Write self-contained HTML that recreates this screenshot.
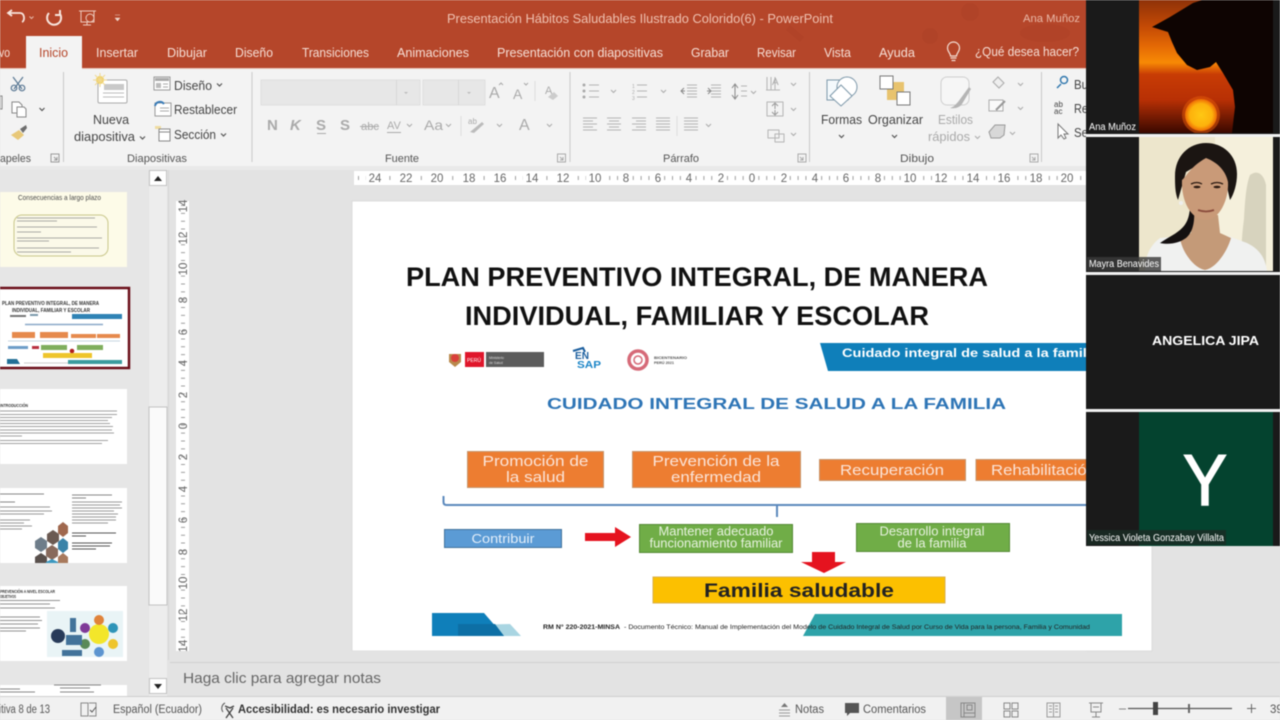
<!DOCTYPE html>
<html lang="es"><head><meta charset="utf-8"><title>PowerPoint</title>
<style>
html,body{margin:0;padding:0;width:1280px;height:720px;overflow:hidden;background:#e3e3e3}
svg{display:block;filter:blur(.4px)}
text{font-family:"Liberation Sans",sans-serif;fill:#444;font-size:12px}
.tab{font-size:12.5px;fill:#f6ded5}
.r{font-size:12.5px;fill:#454545}
.d{font-size:12.5px;fill:#aaa}
.g{font-size:11px;fill:#555}
.b{font-weight:bold}
.w{fill:#fff}
.i{fill:none;stroke:#777;stroke-width:1}
.l{fill:none;stroke:#b5b5b5;stroke-width:1}
.rn{font-size:11.5px;fill:#666;text-anchor:middle}
.box{fill:#fbe4d8;font-size:15px;text-anchor:middle}
.gb{fill:#e7f2df;font-size:12.5px;text-anchor:middle}
.n{fill:#fff;font-size:10px}
.t{fill:#aaa}
.ch{fill:none;stroke:#555;stroke-width:1.2}
.cd{fill:none;stroke:#aaa;stroke-width:1}
</style></head><body>
<svg width="1280" height="720" viewBox="0 0 1280 720" xmlns="http://www.w3.org/2000/svg">
<defs>
<linearGradient id="sun" x1="0" y1="0" x2="0" y2="1"><stop offset="0" stop-color="#8f3208"/><stop offset=".2" stop-color="#c44a05"/><stop offset=".35" stop-color="#e56a05"/><stop offset=".47" stop-color="#f88a05"/><stop offset=".56" stop-color="#c83c05"/><stop offset=".75" stop-color="#b83005"/><stop offset="1" stop-color="#3a0800"/></linearGradient>
<radialGradient id="s2"><stop offset="0" stop-color="#ffc814"/><stop offset=".7" stop-color="#fdb20c"/><stop offset="1" stop-color="#ee6a05"/></radialGradient>
<clipPath id="v1"><rect x="1139" y="0" width="134" height="133"/></clipPath>
<clipPath id="v2"><rect x="1139" y="137" width="134" height="134"/></clipPath>
</defs>

<!-- base -->
<rect width="1280" height="720" fill="#e3e3e3"/>
<rect width="1086" height="68" fill="#b5462a"/>
<rect y="68" width="1086" height="1" fill="#e8c5b8"/>
<rect y="69" width="1086" height="97" fill="#f3f3f3"/>
<rect y="166" width="1086" height="4" fill="#e9e9e9"/>
<g fill="#a83f26" opacity=".35"><ellipse cx="1045" cy="33" rx="25" ry="9"/><circle cx="930" cy="36" r="8"/><circle cx="970" cy="12" r="9"/><path d="M790 25l14 12-4 5-14-12z"/></g>

<!-- QAT -->
<g fill="none" stroke="#f7e4dc" stroke-width="1.8">
<path d="M22 22c3-1 3-9-2-9H9M12 10l-4 3 4 3"/>
<path d="M49 13a7 7 0 1 0 11 1M60 10v5h-5" stroke-width="2"/>
</g>
<path d="M29.500 16.500l2 2 2-2" fill="none" stroke="#e6b9a9"/>
<g fill="none" stroke="#edcabd"><path d="M79 11h17M81 11v11h13V11M87 22v3M83 25h8"/><circle cx="90" cy="18" r="4"/></g>
<path d="M115 15h5M115 18h5l-2.500 3z" fill="#f0d6cb" stroke="#f0d6cb" stroke-width=".5"/>

<!-- tabs -->
<text x="447" y="23" textLength="386" lengthAdjust="spacingAndGlyphs" style="fill:#efc1b0;font-size:12.500px">Presentación Hábitos Saludables Ilustrado Colorido(6)  -  PowerPoint</text>
<text x="1023" y="22" textLength="57" lengthAdjust="spacingAndGlyphs" style="fill:#eab9a8;font-size:11px">Ana Muñoz</text>
<rect x="26" y="36" width="56" height="33" fill="#f3f3f3"/>
<text x="39" y="57" textLength="29" lengthAdjust="spacingAndGlyphs" class="tab" style="fill:#b5462a">Inicio</text>
<text x="-1" y="57" textLength="11" lengthAdjust="spacingAndGlyphs" class="tab">vo</text>
<text x="96" y="57" textLength="42" lengthAdjust="spacingAndGlyphs" class="tab">Insertar</text>
<text x="167" y="57" textLength="40" lengthAdjust="spacingAndGlyphs" class="tab">Dibujar</text>
<text x="235" y="57" textLength="38" lengthAdjust="spacingAndGlyphs" class="tab">Diseño</text>
<text x="302" y="57" textLength="67" lengthAdjust="spacingAndGlyphs" class="tab">Transiciones</text>
<text x="397" y="57" textLength="72" lengthAdjust="spacingAndGlyphs" class="tab">Animaciones</text>
<text x="497" y="57" textLength="166" lengthAdjust="spacingAndGlyphs" class="tab">Presentación con diapositivas</text>
<text x="691" y="57" textLength="38" lengthAdjust="spacingAndGlyphs" class="tab">Grabar</text>
<text x="757" y="57" textLength="39" lengthAdjust="spacingAndGlyphs" class="tab">Revisar</text>
<text x="824" y="57" textLength="27" lengthAdjust="spacingAndGlyphs" class="tab">Vista</text>
<text x="879" y="57" textLength="36" lengthAdjust="spacingAndGlyphs" class="tab">Ayuda</text>
<text x="975" y="56" textLength="104" lengthAdjust="spacingAndGlyphs" class="tab">¿Qué desea hacer?</text>
<path d="M950.500 56c0-3-3-4-3-8a6 6 0 0 1 12 0c0 4-3 5-3 8zM950.500 58h6M951.500 60.500h4" fill="none" stroke="#f3dcd2" stroke-width="1.200"/>

<!-- ribbon separators -->
<g stroke="#c9c9c9"><path d="M63.500 72v90M252 72v90M570 72v90M809.500 72v90M1041.500 72v90"/></g>
<text x="0" y="162" textLength="31" lengthAdjust="spacingAndGlyphs" class="g">apeles</text>
<text x="127" y="162" textLength="60" lengthAdjust="spacingAndGlyphs" class="g">Diapositivas</text>
<text x="385" y="162" textLength="34" lengthAdjust="spacingAndGlyphs" class="g">Fuente</text>
<text x="663" y="162" textLength="36" lengthAdjust="spacingAndGlyphs" class="g">Párrafo</text>
<text x="900" y="162" textLength="34" lengthAdjust="spacingAndGlyphs" class="g">Dibujo</text>
<g fill="none" stroke="#999"><path d="M51 154h8v8h-8zM54 157l3 3M57 157v3h-3"/></g>
<g fill="none" stroke="#aaa"><path d="M557.500 154h8v8h-8zM560 157l3 3M563 157v3h-3M798 154h8v8h-8zM800 157l3 3M803 157v3h-3M1030 154h8v8h-8zM1032 157l3 3M1035 157v3h-3"/></g>

<!-- clipboard -->
<g fill="none" stroke="#5a7894" stroke-width="1.200"><path d="M13 77l9 12M23 77l-9 12"/><circle cx="14" cy="88" r="2.800"/><circle cx="22" cy="88" r="2.800"/></g>
<g fill="#fff" stroke="#888"><path d="M12 102h7l3 3v8h-10z"/><path d="M17 107h7l2 2v8h-9z"/></g>
<path d="M39.500 108l2.500 2.500 2.500-2.500" class="ch"/>
<path d="M11 135l8-5 5 5-6 5z" fill="#e8c878"/><path d="M20 129l6-4 1 3-4 5z" fill="#6e6e6e"/>
<path d="M0 96h2v13H0z" fill="#fff" stroke="#888"/>

<!-- slides group -->
<rect x="98" y="80" width="29" height="23" rx="1.500" fill="#fff" stroke="#aaa"/><rect x="104" y="84" width="20" height="6" fill="#c9c9c9"/><path d="M103 93h21M103 97h21" stroke="#bbb"/>
<circle cx="100" cy="80" r="4" fill="#f0d060"/><path d="M100 73v14M93 80h14M95 75l10 10M105 75l-10 10" stroke="#f0d890"/>
<text x="93" y="124" textLength="36" lengthAdjust="spacingAndGlyphs" class="r">Nueva</text>
<text x="74" y="141" textLength="61" lengthAdjust="spacingAndGlyphs" class="r">diapositiva</text>
<path d="M140 136.500l2.500 2.500 2.500-2.500" class="ch"/>
<rect x="154" y="77" width="16" height="13" fill="#fff" stroke="#999"/><rect x="155" y="78" width="14" height="3" fill="#aaa"/><rect x="156" y="83" width="5" height="5" fill="#bbb"/><path d="M163 84h5M163 87h5" stroke="#aaa"/>
<text x="174" y="90" textLength="38" lengthAdjust="spacingAndGlyphs" class="r">Diseño</text>
<path d="M217 83.500l2.500 2.500 2.500-2.500" class="ch"/>
<rect x="155" y="103" width="16" height="13" fill="#fff" stroke="#999"/><path d="M160 108h9M160 111h9" stroke="#aaa"/><path d="M155 106a5 5 0 0 1 9-2" fill="none" stroke="#3a7cb8" stroke-width="2"/>
<text x="174" y="114" textLength="63" lengthAdjust="spacingAndGlyphs" class="r">Restablecer</text>
<path d="M155 126h6v3h-6z" fill="#f0dca0"/><rect x="159" y="129" width="11" height="12" fill="#fff" stroke="#888"/><path d="M159 132h11" stroke="#888"/>
<text x="174" y="139" textLength="42" lengthAdjust="spacingAndGlyphs" class="r">Sección</text>
<path d="M221 133.500l2.500 2.500 2.500-2.500" class="ch"/>

<!-- font group -->
<rect x="261" y="80" width="159" height="25" fill="#e7e7e7" stroke="#dfdfdf"/>
<rect x="396" y="80" width="1" height="25" fill="#d8d8d8"/>
<rect x="423" y="80" width="62" height="25" fill="#e7e7e7" stroke="#dfdfdf"/>
<rect x="458" y="80" width="1" height="25" fill="#d8d8d8"/>
<path d="M404 92h4l-2 2zM467 92h4l-2 2z" fill="#bbb"/>
<text x="489" y="98" style="font-size:16px" class="t">A</text><text x="513" y="99" style="font-size:14px" class="t">A</text>
<path d="M499 85l2-2 2 2M524 83l2 2 2-2" class="cd"/>
<path d="M535 81v20" stroke="#ddd"/>
<text x="545" y="94" style="font-size:11px" class="t">A</text><path d="M548 97l6-5 4 4-5 4z" fill="#ccc"/>
<text x="267" y="130" class="b t" style="font-size:15px">N</text>
<text x="290" y="130" class="b t" style="font-size:15px;font-style:italic">K</text>
<text x="316" y="130" class="b t" style="font-size:15px">S</text><path d="M317 133.500h9" stroke="#aaa"/>
<text x="340" y="130" class="b t" style="font-size:15px">S</text>
<text x="361" y="130" class="t" style="font-size:11px" textLength="18" lengthAdjust="spacingAndGlyphs">abc</text><path d="M360 126.500h19" stroke="#aaa"/>
<text x="387" y="129" class="t" style="font-size:11px">AV</text><path d="M387 132.500h14" stroke="#aaa"/>
<path d="M407 124l2.500 2.500 2.500-2.500" class="cd"/>
<text x="424" y="130" class="t" style="font-size:14px" textLength="19" lengthAdjust="spacingAndGlyphs">Aa</text>
<path d="M446 124l2.500 2.500 2.500-2.500" class="cd"/>
<path d="M461 116v20" stroke="#ddd"/>
<text x="468" y="124" class="t" style="font-size:8px">ab</text><path d="M470 132l12-10 2 2-10 9z" fill="#bbb"/>
<path d="M497 124l2.500 2.500 2.500-2.500" class="cd"/>
<text x="519" y="130" class="t" style="font-size:16px">A</text>
<path d="M547 124l2.500 2.500 2.500-2.500" class="cd"/>

<!-- paragraph group -->
<g class="l">
<path d="M589 85h10M589 91h10M589 97h10M637 85h10M637 91h10M637 97h10M687 85h10M687 88h10M687 91h10M687 94h10M687 97h10M711 85h10M711 88h10M711 91h10M711 94h10M711 97h10M741 86h6M741 91h6M741 96h6"/>
<path d="M583 118h14M583 121h10M583 124h14M583 127h10M583 130h14M607 118h14M609 121h10M607 124h14M609 127h10M607 130h14M632 118h14M636 121h10M632 124h14M636 127h10M632 130h14M656 118h14M656 121h14M656 124h14M656 127h14M656 130h14M684 118h14M684 121h14M684 124h14M684 127h14M684 130h14"/>
<path d="M677 116v20" stroke="#ddd"/>
<path d="M767 77v13M771 77v13M775 77v13M766 90h14M767 102h16v14h-16zM768 130h11v8h-11zM775 134h9v8h-9z"/>
</g>
<circle cx="584" cy="85" r="1.500" fill="#aaa"/><circle cx="584" cy="91" r="1.500" fill="#aaa"/><circle cx="584" cy="97" r="1.500" fill="#aaa"/>
<text x="632" y="88" style="font-size:5px" class="t">1</text><text x="632" y="94" style="font-size:5px" class="t">2</text><text x="632" y="100" style="font-size:5px" class="t">3</text>
<path d="M611 90l2.500 2.500 2.500-2.500M661 90l2.500 2.500 2.500-2.500M751 91l2.500 2.500 2.500-2.500M706 124l2.500 2.500 2.500-2.500M791 83l2.500 2.500 2.500-2.500M791 108l2.500 2.500 2.500-2.500M791 133l2.500 2.500 2.500-2.500" class="cd"/>
<path d="M685 91h-4M684 88l-3 3 3 3M707 91h3M708 88l3 3-3 3" fill="none" stroke="#888"/>
<path d="M735 85v13M732 88l3-4 3 4M732 95l3 4 3-4" fill="none" stroke="#888"/>
<text x="772" y="85" style="font-size:10px" class="t">A</text>
<path d="M775 104v5M772 106l3-3 3 3M775 110v5M772 112l3 3 3-3" fill="none" stroke="#999"/>

<!-- drawing group -->
<rect x="827" y="80" width="21" height="20" fill="#f4f9fc" stroke="#7d98aa"/>
<circle cx="847" cy="87" r="10" fill="#fff" stroke="#7d98aa"/>
<path d="M841 85l11 11-11 10-11-10z" fill="#fff" stroke="#7d98aa"/>
<text x="821" y="124" textLength="41" lengthAdjust="spacingAndGlyphs" class="r">Formas</text>
<path d="M839 135l2.500 2.500 2.500-2.500" class="ch"/>
<rect x="887" y="82" width="17" height="18" fill="#e8c36e"/>
<rect x="880" y="76" width="13" height="13" fill="#fff" stroke="#777"/>
<rect x="897" y="92" width="13" height="13" fill="#fff" stroke="#777"/>
<text x="868" y="124" textLength="55" lengthAdjust="spacingAndGlyphs" class="r">Organizar</text>
<path d="M892 135l2.500 2.500 2.500-2.500" class="ch"/>
<rect x="941" y="77" width="28" height="28" rx="6" fill="#f6f6f6" stroke="#cfcfcf"/>
<path d="M950 108c4-1 6-4 8-6l11-15 2 2-9 15c-2 3-6 5-12 4z" fill="#b5b5b5"/>
<text x="938" y="124" textLength="35" lengthAdjust="spacingAndGlyphs" class="d">Estilos</text>
<text x="928" y="141" textLength="42" lengthAdjust="spacingAndGlyphs" class="d">rápidos</text>
<path d="M975 136l2.500 2.500 2.500-2.500" class="cd"/>
<path d="M993 82l5-5 6 6-5 5z" fill="#eee" stroke="#aaa"/>
<path d="M1018 83l2.500 2.500 2.500-2.500M1018 107l2.500 2.500 2.500-2.500M1010 132l2.500 2.500 2.500-2.500" class="cd"/>
<path d="M989 100h14v11h-14z" fill="#fafafa" stroke="#aaa"/><path d="M996 110l9-9" stroke="#999" stroke-width="2"/>
<path d="M989 132l6-7h10l-1 10-4 3h-9z" fill="#d8d8d8" stroke="#999"/>

<!-- edit group -->
<circle cx="1064" cy="80" r="3.500" fill="none" stroke="#3178ae" stroke-width="1.500"/><path d="M1061 84l-4 4" stroke="#3178ae" stroke-width="1.500"/>
<text x="1074" y="89" class="r" textLength="14" lengthAdjust="spacingAndGlyphs">Bu</text>
<text x="1054" y="107" style="font-size:8px;fill:#444">ab</text><text x="1054" y="114" style="font-size:8px;fill:#444">ac</text>
<text x="1074" y="113" class="r" textLength="14" lengthAdjust="spacingAndGlyphs">Re</text>
<path d="M1058 124v14l3-3 3 4 2-1-2-4h4z" fill="#fff" stroke="#777"/>
<text x="1074" y="137" class="r" textLength="14" lengthAdjust="spacingAndGlyphs">Se</text>

<!-- workspace -->
<rect x="0" y="170" width="148" height="526" fill="#e6e6e6"/>
<rect x="149" y="170" width="18" height="526" fill="#ededed"/>
<rect x="149" y="407" width="18" height="198" fill="#fafafa" stroke="#c2c2c2"/>
<rect x="149.500" y="170.500" width="17" height="15" fill="#fff" stroke="#c2c2c2"/>
<path d="M154 181h8l-4-5z" fill="#222"/>
<rect x="149.500" y="678.500" width="17" height="15" fill="#fff" stroke="#c2c2c2"/>
<path d="M154 684h8l-4 5z" fill="#222"/>
<rect x="168" y="170" width="1" height="490" fill="#d5d5d5"/>

<!-- rulers -->
<rect x="354" y="171" width="732" height="14" fill="#fff"/>
<path d="M358 178H1086" stroke="#777" stroke-width="4" stroke-dasharray="1 6.850" opacity=".7"/>
<rect x="176" y="201" width="13" height="450" fill="#fff"/>
<path d="M183 205V650" stroke="#777" stroke-width="4" stroke-dasharray="1 6.850" opacity=".7"/>
<g fill="#fff"><rect x="366" y="172" width="19" height="12"/><rect x="397" y="172" width="19" height="12"/><rect x="428" y="172" width="19" height="12"/><rect x="460" y="172" width="19" height="12"/><rect x="491" y="172" width="19" height="12"/><rect x="523" y="172" width="19" height="12"/><rect x="554" y="172" width="19" height="12"/><rect x="586" y="172" width="19" height="12"/><rect x="621" y="172" width="10" height="12"/><rect x="653" y="172" width="10" height="12"/><rect x="684" y="172" width="10" height="12"/><rect x="716" y="172" width="10" height="12"/><rect x="747" y="172" width="10" height="12"/><rect x="779" y="172" width="10" height="12"/><rect x="810" y="172" width="10" height="12"/><rect x="841" y="172" width="10" height="12"/><rect x="873" y="172" width="10" height="12"/><rect x="901" y="172" width="19" height="12"/><rect x="932" y="172" width="19" height="12"/><rect x="964" y="172" width="19" height="12"/><rect x="995" y="172" width="19" height="12"/><rect x="1027" y="172" width="19" height="12"/><rect x="1058" y="172" width="19" height="12"/></g>
<g>
<text class="rn" x="375" y="182">24</text><text class="rn" x="406" y="182">22</text><text class="rn" x="437" y="182">20</text><text class="rn" x="469" y="182">18</text><text class="rn" x="500" y="182">16</text><text class="rn" x="532" y="182">14</text><text class="rn" x="563" y="182">12</text><text class="rn" x="595" y="182">10</text><text class="rn" x="626" y="182">8</text><text class="rn" x="658" y="182">6</text><text class="rn" x="689" y="182">4</text><text class="rn" x="721" y="182">2</text><text class="rn" x="752" y="182">0</text><text class="rn" x="784" y="182">2</text><text class="rn" x="815" y="182">4</text><text class="rn" x="846" y="182">6</text><text class="rn" x="878" y="182">8</text><text class="rn" x="910" y="182">10</text><text class="rn" x="941" y="182">12</text><text class="rn" x="973" y="182">14</text><text class="rn" x="1004" y="182">16</text><text class="rn" x="1036" y="182">18</text><text class="rn" x="1067" y="182">20</text>
</g>
<g>
<text class="rn" transform="translate(187 206) rotate(-90)">14</text><text class="rn" transform="translate(187 238) rotate(-90)">12</text><text class="rn" transform="translate(187 269) rotate(-90)">10</text><text class="rn" transform="translate(187 300) rotate(-90)">8</text><text class="rn" transform="translate(187 332) rotate(-90)">6</text><text class="rn" transform="translate(187 363) rotate(-90)">4</text><text class="rn" transform="translate(187 395) rotate(-90)">2</text><text class="rn" transform="translate(187 426) rotate(-90)">0</text><text class="rn" transform="translate(187 457) rotate(-90)">2</text><text class="rn" transform="translate(187 489) rotate(-90)">4</text><text class="rn" transform="translate(187 520) rotate(-90)">6</text><text class="rn" transform="translate(187 552) rotate(-90)">8</text><text class="rn" transform="translate(187 583) rotate(-90)">10</text><text class="rn" transform="translate(187 615) rotate(-90)">12</text><text class="rn" transform="translate(187 646) rotate(-90)">14</text>
</g>

<!-- thumbnails -->
<rect x="-1" y="192" width="128" height="75" fill="#fdfbe8"/>
<text x="18" y="200" textLength="83" lengthAdjust="spacingAndGlyphs" style="font-size:7.500px;fill:#4a4a4a">Consecuencias a largo plazo</text>
<rect x="14" y="215" width="94" height="41" rx="8" fill="#fbf9e9" stroke="#c9c78a"/>
<g stroke="#8a8a8a" stroke-width="1" opacity=".7"><path d="M17 218h78M17 221h40M17 227h80M17 232h24M17 238h85M17 241h32M17 248h82M17 252h54"/></g>

<rect x="-2" y="288" width="131" height="80" fill="#fff" stroke="#6b0f1a" stroke-width="2.500"/>
<text x="2" y="305" textLength="97" lengthAdjust="spacingAndGlyphs" class="b" style="font-size:5.500px;fill:#333">PLAN PREVENTIVO INTEGRAL, DE MANERA</text>
<text x="12" y="312" textLength="78" lengthAdjust="spacingAndGlyphs" class="b" style="font-size:5.500px;fill:#333">INDIVIDUAL, FAMILIAR Y ESCOLAR</text>
<path d="M10 316h16" stroke="#777" stroke-width="2"/><path d="M30 315h8" stroke="#7a98aa" stroke-width="2"/>
<rect x="72" y="314" width="50" height="5" fill="#2f83b5"/>
<path d="M25 324.500h78" stroke="#8aa8c8" stroke-width="1.500"/>
<g fill="#e68a4d"><rect x="12" y="332" width="23" height="6"/><rect x="40" y="332" width="28" height="6"/><rect x="71" y="334" width="25" height="4"/><rect x="97" y="334" width="23" height="4"/></g>
<path d="M8 341h112" stroke="#c6d4e0"/>
<rect x="8" y="346" width="20" height="3" fill="#6d9dc8"/><rect x="32" y="346" width="7" height="3" fill="#b83040"/>
<rect x="41" y="345" width="26" height="5" fill="#7fae5d"/><rect x="77" y="345" width="26" height="5" fill="#7fae5d"/>
<circle cx="72" cy="351" r="2.300" fill="#b02020"/>
<rect x="43" y="353" width="49" height="5" fill="#eec52c"/>
<path d="M7 359h10l3 5H7z" fill="#226f96"/><rect x="68" y="360" width="54" height="4" fill="#3b9c9e"/><path d="M24 363h44" stroke="#ccc"/>

<rect x="-1" y="389" width="128" height="75" fill="#fff"/>
<text x="0" y="407" textLength="28" lengthAdjust="spacingAndGlyphs" class="b" style="font-size:4.500px;fill:#333">INTRODUCCIÓN</text>
<g stroke="#8a8a8a" opacity=".8"><path d="M0 411h117M0 414.500h117M0 417.500h112M0 420.500h108M0 423.500h110M0 426.500h113M0 430h112M0 433h114M0 436h22M0 440.500h108M0 443.500h102"/></g>

<rect x="-1" y="488" width="128" height="75" fill="#fff"/>
<g stroke="#555" opacity=".7"><path d="M0 494h44M72 495h40M72 498h14"/><path d="M0 502h15"/></g>
<g stroke="#999"><path d="M0 507h50M0 511h52M0 514h44M0 520h30M0 523h24M0 526h32M0 529h22M72 502h50M72 505h48M72 508h50M72 511h42M72 514h46M72 517h44M72 520h44M72 523h36"/></g>
<g stroke="#555"><path d="M72 533h44M72 536h14M72 543h40M72 546h38M72 549h24"/></g>
<g><polygon points="41,537 47,541 47,548 41,552 35,548 35,541" fill="#6e7d8a"/><polygon points="53,530 59,534 59,541 53,545 47,541 47,534" fill="#6b5a52"/><polygon points="63,522 68,526 68,533 63,537 58,533 58,526" fill="#a0684e"/><polygon points="52,545 58,549 58,556 52,560 46,556 46,549" fill="#886a5c"/><polygon points="63,538 68,542 68,549 63,553 58,549 58,542" fill="#3b83a8"/><polygon points="41,553 47,557 47,563 35,563 35,557" fill="#59504c"/><polygon points="63,553 68,557 68,563 58,563 58,557" fill="#a8795c"/><polygon points="52,559 58,562 58,563 46,563 46,562" fill="#3b98c0"/></g>

<rect x="-1" y="586" width="128" height="75" fill="#fff"/>
<text x="0" y="593" textLength="55" lengthAdjust="spacingAndGlyphs" class="b" style="font-size:4.500px;fill:#333">PREVENCIÓN A NIVEL ESCOLAR</text>
<text x="0" y="598" textLength="16" lengthAdjust="spacingAndGlyphs" class="b" style="font-size:4.500px;fill:#333">OBJETIVOS</text>
<g stroke="#777" opacity=".8"><path d="M0 600.500h60M0 604h50M0 608h55M0 617h40M0 620.500h42M0 624h38M0 628h40M0 631h26"/></g>
<rect x="47" y="611" width="76" height="46" fill="#e9f4f6"/>
<circle cx="99" cy="634" r="10" fill="#f3e62a"/>
<circle cx="99" cy="620" r="5" fill="#e0833a"/><circle cx="113" cy="628" r="5" fill="#2e94b8"/><circle cx="113" cy="644" r="5" fill="#eec52c"/><circle cx="99" cy="652" r="5" fill="#5d95d0"/><circle cx="85" cy="644" r="5" fill="#5a8a58"/><circle cx="85" cy="628" r="5" fill="#7f3a98"/>
<circle cx="58" cy="636" r="7" fill="#283b5a"/>
<path d="M70 618h6v14h-6zM66 635h16v10H66zM62 650h20v6H62z" fill="#43739a"/>

<rect x="-1" y="685" width="128" height="11" fill="#fff"/>
<g stroke="#555" opacity=".7"><path d="M0 689h20M54 685h47M60 688h30M0 692h35M60 692h34"/></g>

<!-- slide -->
<rect x="352" y="201" width="800" height="450" fill="#fff" stroke="#dcdcdc"/>
<text x="406" y="286" textLength="582" lengthAdjust="spacingAndGlyphs" class="b" style="font-size:27px;fill:#111">PLAN PREVENTIVO INTEGRAL, DE MANERA</text>
<text x="465" y="325" textLength="464" lengthAdjust="spacingAndGlyphs" class="b" style="font-size:27px;fill:#111">INDIVIDUAL, FAMILIAR Y ESCOLAR</text>
<!-- logos -->
<path d="M449 354h12v8l-6 5-6-5z" fill="#b9894c"/><circle cx="455" cy="358" r="4" fill="#d9403a"/>
<rect x="465" y="352" width="19" height="15" fill="#e0162b"/>
<text x="467" y="362" class="w" style="font-size:5.500px" textLength="14" lengthAdjust="spacingAndGlyphs">PERÚ</text>
<rect x="486" y="352" width="58" height="15" fill="#5c5c5c"/>
<text x="489" y="359" style="font-size:3.500px;fill:#ddd">Ministerio</text><text x="489" y="364" style="font-size:3.500px;fill:#ddd">de Salud</text>
<path d="M573 351l10-3 2 4" fill="none" stroke="#1b5e9e" stroke-width="2"/>
<text x="575" y="359" class="b" style="font-size:10px;fill:#1b5e9e" textLength="14" lengthAdjust="spacingAndGlyphs">EN</text>
<text x="577" y="368" class="b" style="font-size:10px;fill:#1b85c7" textLength="24" lengthAdjust="spacingAndGlyphs">SAP</text>
<circle cx="638" cy="360" r="9" fill="none" stroke="#d66a78" stroke-width="3.500"/><circle cx="638" cy="360" r="4" fill="none" stroke="#d66a78" stroke-width="1.500"/>
<text x="654" y="359" class="b" style="font-size:3.800px;fill:#555" textLength="33" lengthAdjust="spacingAndGlyphs">BICENTENARIO</text>
<text x="654" y="364" class="b" style="font-size:3.800px;fill:#555" textLength="20" lengthAdjust="spacingAndGlyphs">PERÚ 2021</text>
<!-- banner -->
<polygon points="820,343 1100,343 1100,371 828,371" fill="#0f7fba"/>
<text x="842" y="357" textLength="257" lengthAdjust="spacingAndGlyphs" class="b w" style="font-size:12px">Cuidado integral de salud  a la familia</text>
<!-- heading -->
<text x="547" y="409" textLength="459" lengthAdjust="spacingAndGlyphs" class="b" style="font-size:16px;fill:#2e75b6">CUIDADO INTEGRAL DE SALUD A LA FAMILIA</text>
<!-- orange -->
<g fill="#ed7d31" stroke="#c7956c"><rect x="467.500" y="451.500" width="136" height="36"/><rect x="632.500" y="451.500" width="168" height="36"/><rect x="819.500" y="459.500" width="146" height="21"/><rect x="976" y="459.500" width="130" height="21"/></g>
<text class="box" x="535.500" y="466" textLength="106" lengthAdjust="spacingAndGlyphs">Promoción de</text>
<text class="box" x="535.500" y="482" textLength="59" lengthAdjust="spacingAndGlyphs">la salud</text>
<text class="box" x="716" y="466" textLength="127" lengthAdjust="spacingAndGlyphs">Prevención de la</text>
<text class="box" x="716" y="482" textLength="90" lengthAdjust="spacingAndGlyphs">enfermedad</text>
<text class="box" x="892" y="475" textLength="104" lengthAdjust="spacingAndGlyphs">Recuperación</text>
<text class="box" style="text-anchor:start" x="991" y="475" textLength="105" lengthAdjust="spacingAndGlyphs">Rehabilitación</text>
<!-- bracket -->
<path d="M443.500 496v6q0 3 3 3H1090M777 505v12" fill="none" stroke="#5b89bd" stroke-width="2"/>
<!-- row 2 -->
<rect x="444.500" y="529.500" width="117" height="18" fill="#5b9bd5" stroke="#41719c"/>
<text x="503" y="543" textLength="63" lengthAdjust="spacingAndGlyphs" style="font-size:13px;fill:#e4effa;text-anchor:middle">Contribuir</text>
<path d="M585 533h30v-6l16 10-16 10v-6h-30z" fill="#e5131f"/>
<rect x="639.500" y="524.500" width="153" height="28" fill="#70ad47" stroke="#558a36"/>
<rect x="856.500" y="523.500" width="153" height="28" fill="#70ad47" stroke="#558a36"/>
<text class="gb" x="716" y="535.500" textLength="115" lengthAdjust="spacingAndGlyphs">Mantener adecuado</text>
<text class="gb" x="716" y="547.500" textLength="133" lengthAdjust="spacingAndGlyphs">funcionamiento familiar</text>
<text class="gb" x="932" y="535.500" textLength="105" lengthAdjust="spacingAndGlyphs">Desarrollo integral</text>
<text class="gb" x="932" y="547.500" textLength="69" lengthAdjust="spacingAndGlyphs">de la familia</text>
<path d="M812 552h23v10h11l-22 11-23-11h11z" fill="#e5131f"/>
<rect x="653" y="577" width="292" height="26" fill="#fcc000" stroke="#d9b04c"/>
<text x="799" y="597" textLength="190" lengthAdjust="spacingAndGlyphs" class="b" style="font-size:19px;fill:#222;text-anchor:middle">Familia saludable</text>
<!-- footer -->
<polygon points="470,625 510,624 521,636 490,636" fill="#a9d5e2"/>
<polygon points="432,613 484,613 504,636 432,636" fill="#0f7fba"/>
<polygon points="458,624 495,624 504,636 458,636" fill="#0d6fa5"/>
<polygon points="815,614 1122,614 1122,636 803,636" fill="#2ea3a9"/>
<text x="543" y="629" textLength="77" lengthAdjust="spacingAndGlyphs" class="b" style="font-size:6.500px;fill:#222">RM N° 220-2021-MINSA</text>
<text x="624" y="629" textLength="466" lengthAdjust="spacingAndGlyphs" style="font-size:6.500px;fill:#222">- Documento Técnico: Manual de Implementación del Modelo de Cuidado Integral de Salud por Curso de Vida para la persona, Familia y Comunidad</text>

<!-- notes -->
<rect x="170" y="651" width="916" height="12" fill="#e3e3e3"/>
<rect x="170" y="662" width="1110" height="1" fill="#d0d0d0"/>
<text x="183" y="683" textLength="198" lengthAdjust="spacingAndGlyphs" style="font-size:14.500px;fill:#666">Haga clic para agregar notas</text>

<!-- status -->
<rect y="696" width="1280" height="24" fill="#f1f1f1"/>
<rect y="696" width="1280" height="1" fill="#cfcfcf"/>
<text x="-1" y="713" textLength="51" lengthAdjust="spacingAndGlyphs" style="font-size:11.500px;fill:#555">itiva 8 de 13</text>
<path d="M81 703h7v13h-7zM89 703h7v13h-7" fill="none" stroke="#888"/><path d="M90 710l2 2 4-5" fill="none" stroke="#555"/>
<text x="113" y="713" textLength="89" lengthAdjust="spacingAndGlyphs" style="font-size:11.500px;fill:#555">Español (Ecuador)</text>
<path d="M225 703a6 6 0 0 0-2 9" fill="none" stroke="#555"/><path d="M226 708l7 10M233 708l-7 10M225 706l5 2 4-2" fill="none" stroke="#444" stroke-width="1.300"/>
<text x="238" y="713" textLength="202" lengthAdjust="spacingAndGlyphs" class="b" style="font-size:11.500px;fill:#333">Accesibilidad: es necesario investigar</text>
<path d="M779 710h11M779 713h11M779 716h11" stroke="#999"/><path d="M781 707l3.500-4 3.500 4z" fill="#777"/>
<text x="795" y="713" textLength="29" lengthAdjust="spacingAndGlyphs" style="font-size:11.500px;fill:#555">Notas</text>
<path d="M845 703h14v10h-9l-3 3v-3h-2z" fill="#555"/>
<text x="863" y="713" textLength="63" lengthAdjust="spacingAndGlyphs" style="font-size:11.500px;fill:#555">Comentarios</text>
<rect x="946" y="697" width="36" height="23" fill="#c6c6c6"/>
<path d="M961 703h14v14h-14zM964 703v14M964 713h11M967 705h5v5h-5z" fill="none" stroke="#888"/>
<path d="M1004 703h6v6h-6zM1012 703h6v6h-6zM1004 711h6v6h-6zM1012 711h6v6h-6z" fill="none" stroke="#888"/>
<path d="M1047 703h13v14h-13zM1053.500 703v14M1049 706h3M1049 709h3M1049 712h3M1055 706h3M1055 709h3M1055 712h3" fill="none" stroke="#999"/>
<path d="M1089 703h14M1091 703v9h10v-9M1096 712v5M1092 717h8M1093 707h6" fill="none" stroke="#888"/>
<path d="M1119 709h7" stroke="#888"/>
<path d="M1128 708.500h104" stroke="#555" stroke-width="1.200"/>
<rect x="1153" y="702" width="5" height="13" fill="#444"/>
<rect x="1188" y="704" width="2" height="9" fill="#666"/>
<path d="M1247 708.500h9M1251.500 704v9" stroke="#666"/>
<text x="1270" y="713" style="font-size:11.500px;fill:#555">39</text>

<!-- zoom gallery -->
<rect x="1086" y="0" width="194" height="134" fill="#1a1a1a"/>
<rect x="1086" y="134" width="194" height="3" fill="#f1f1f1"/>
<rect x="1086" y="137" width="194" height="135" fill="#1a1a1a"/>
<rect x="1086" y="272" width="194" height="3" fill="#f1f1f1"/>
<rect x="1086" y="275" width="194" height="134" fill="#1a1a1a"/>
<rect x="1086" y="409" width="194" height="3" fill="#f1f1f1"/>
<rect x="1086" y="412" width="194" height="134" fill="#1a1a1a"/>

<!-- panel 1 -->
<g clip-path="url(#v1)">
<rect x="1139" y="0" width="134" height="133" fill="url(#sun)"/>
<circle cx="1201" cy="115" r="19" fill="#e0590a" opacity=".55"/>
<circle cx="1201" cy="115" r="16" fill="url(#s2)"/>
<path d="M1152 27L1170 17L1193 3L1202 0H1273V133H1232L1235 107L1233 90L1223 73L1216 62L1210 67L1197 70L1187 65L1177 53L1172 42L1168 32Z" fill="#0e0402"/>
</g>
<rect x="1086" y="119" width="53" height="14" fill="#1a1a1a"/>
<text x="1089" y="130" textLength="47" lengthAdjust="spacingAndGlyphs" class="n">Ana Muñoz</text>

<!-- panel 2 -->
<g clip-path="url(#v2)">
<rect x="1139" y="137" width="134" height="134" fill="#ede6cc"/>
<rect x="1215" y="137" width="58" height="134" fill="#f5f0dc"/>
<path d="M1250 175c8-6 14 0 16 10v86h-22c-4-20-2-36 0-52 1-17 2-34 6-44z" fill="#b9b5a0" opacity=".5"/>
<path d="M1145 271c0-12 3-24 15-33l22-2h46l19 7c12 6 18 14 20 28z" fill="#f0f1f0"/>
<path d="M1180 238c2 14 14 30 25 32 11-2 22-18 26-32l-11-5-2-18h-26l-1 18z" fill="#c49a78"/>
<path d="M1190 208c-1 10-3 16-10 22-6 5-13 8-20 13 10 2 19 0 26-5 7-6 9-16 8-30z" fill="#141010"/>
<path d="M1178 200c-3-7-3-16-3-24 0-20 14-33 31-33 17 0 31 12 31 31 0 10-3 20-7 26l-6-26-18-14-20 12z" fill="#1b1512"/>
<path d="M1182 180c5-4 8-13 24-22 13 5 20 14 22 24 1 18-9 38-22 38-15 0-25-19-24-40z" fill="#c99a78"/>
<path d="M1191 184q6-3 11 0M1211 184q6-3 12 0" fill="none" stroke="#2a1a12" stroke-width="1.300"/>
<ellipse cx="1197" cy="187" rx="3.500" ry="1.300" fill="#2a1a12"/><ellipse cx="1217" cy="187" rx="3.500" ry="1.300" fill="#2a1a12"/>
<path d="M1198 210q8 3 16 0" fill="none" stroke="#8a4b3c" stroke-width="1.800"/>
<circle cx="1181" cy="203" r="2" fill="#eee"/>
</g>
<rect x="1087" y="257" width="74" height="14" fill="#3a3a3a" opacity=".82"/>
<text x="1089" y="267" textLength="70" lengthAdjust="spacingAndGlyphs" class="n">Mayra Benavides</text>

<!-- panel 3 -->
<text x="1152" y="345" textLength="107" lengthAdjust="spacingAndGlyphs" class="b w" style="font-size:13px">ANGELICA JIPA</text>

<!-- panel 4 -->
<rect x="1139" y="412" width="134" height="134" fill="#04432f"/>
<text x="1205" y="505" class="w" textLength="44" lengthAdjust="spacingAndGlyphs" style="font-size:72px;text-anchor:middle;stroke:#fff;stroke-width:1.500px">Y</text>
<rect x="1087" y="530" width="139" height="15" fill="#1a2b25" opacity=".85"/>
<text x="1089" y="541" textLength="135" lengthAdjust="spacingAndGlyphs" class="n">Yessica Violeta Gonzabay Villalta</text>
</svg>
</body></html>
